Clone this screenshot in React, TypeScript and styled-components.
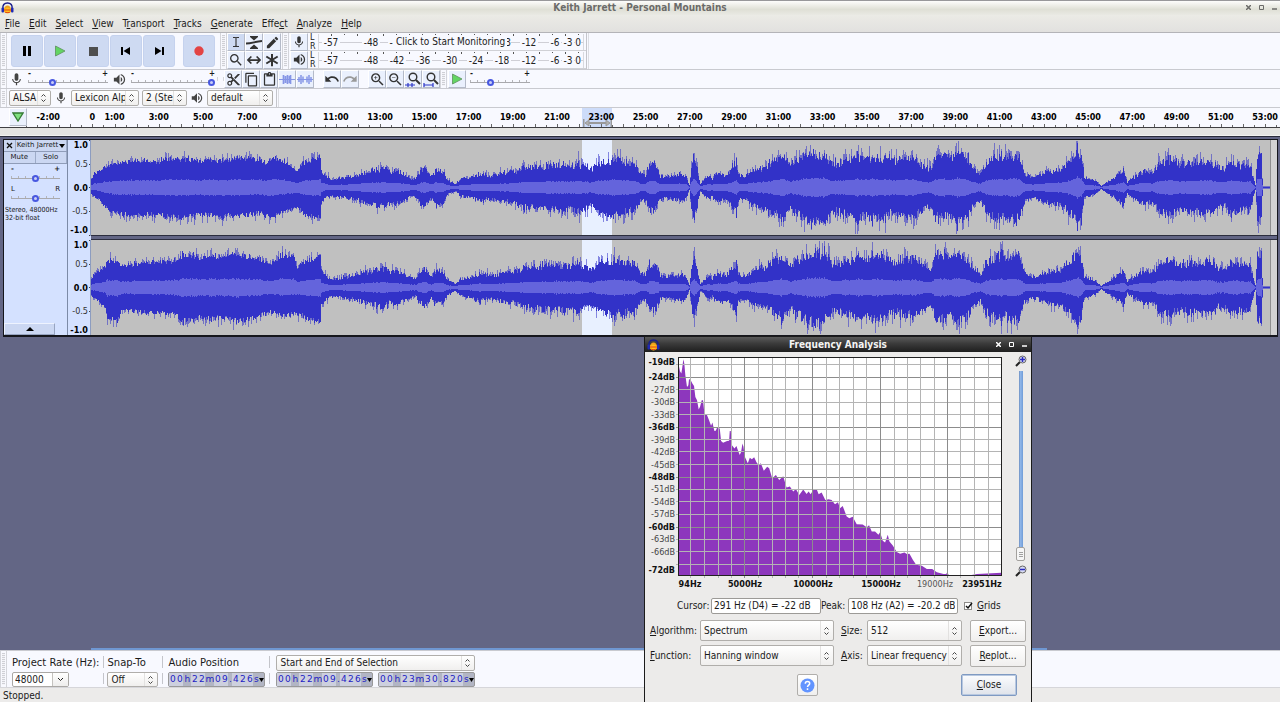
import React from "react";
import styled, { createGlobalStyle, css } from "styled-components";
import {
  MdMic,
  MdVolumeUp,
  MdContentCut,
  MdContentCopy,
  MdContentPaste,
  MdEdit,
  MdSearch,
  MdUndo,
  MdRedo,
  MdZoomIn,
  MdZoomOut,
} from "react-icons/md";

const condensed = '"DejaVu Sans Condensed", "DejaVu Sans", sans-serif';
const regular = '"DejaVu Sans", sans-serif';

const GlobalStyle = createGlobalStyle`
  * { box-sizing: border-box; }
  html, body { margin: 0; height: 100%; overflow: hidden; }
  body { font: 10px/12px ${condensed}; color: #1a1a1a; background: #636685; }
  button, input, select { font: inherit; color: inherit; margin: 0; padding: 0; }
  svg { display: block; flex: none; }
`;

const Page = styled.div`
  position: relative;
  display: flex;
  flex-direction: column;
  height: 100vh;
  overflow: hidden;
`;

/* ---------- window frame and menu ---------- */

const TitleBar = styled.header`
  display: grid;
  grid-template-columns: 1fr auto 1fr;
  align-items: center;
  height: 15px;
  padding: 0 1px 1px;
  border-top: 1px solid #98989a;
  background: linear-gradient(#fdfdfb, #dfe0d6 60%, #e9e9e4);
`;

const WindowTitle = styled.h1`
  margin: 0;
  font: bold 10px/12px ${condensed};
  color: #6b6b69;
`;

const WindowControls = styled.div<{ $light?: boolean }>`
  display: flex;
  justify-content: flex-end;
  gap: 4px;
  color: ${(p) => (p.$light ? "#fff" : "#6b6b69")};
`;

const PlainButton = styled.button`
  display: flex;
  align-items: center;
  justify-content: center;
  width: 9px;
  height: 12px;
  border: 0;
  background: none;
`;

const MenuBar = styled.nav`
  display: flex;
  align-items: center;
  gap: 9px;
  height: 18px;
  padding: 0 5px;
  background: linear-gradient(#ebebe6, #e2e1df);
  border-bottom: 1px solid #b4b4b8;
`;

const MenuItem = styled.a`
  color: #1c1c1c;
  text-decoration: none;
  white-space: nowrap;
`;

/* ---------- toolbars ---------- */

const ToolDock = styled.div`
  background: #f8f9ff;
`;

const ToolRow = styled.div<{ $h: number }>`
  display: flex;
  align-items: center;
  height: ${(p) => p.$h}px;
  border-bottom: 1px solid #c9cad0;
  overflow: hidden;
`;

const Grip = styled.i`
  flex: none;
  align-self: stretch;
  width: 7px;
  border-right: 1px solid #d4d5da;
  border-left: 1px solid #d4d5da;
  background: repeating-linear-gradient(#cfd0d6 0 1px, #f4f4f8 1px 2px) content-box;
  padding: 2px 1px;
`;

const Divider = styled.i`
  flex: none;
  align-self: stretch;
  width: 3px;
  border-left: 1px solid #c4c5cb;
  border-right: 1px solid #dcdde2;
`;

const TransportGroup = styled.div`
  display: flex;
  gap: 1px;
  padding: 0 5px 0 4px;
`;

const TransportButton = styled.button<{ $apart?: boolean }>`
  display: flex;
  align-items: center;
  justify-content: center;
  width: 32px;
  height: 32px;
  margin-left: ${(p) => (p.$apart ? 7 : 0)}px;
  border: 1px solid #c5d2ee;
  border-radius: 3px;
  background: #cedaf2;
`;

const ToolGrid = styled.div`
  display: grid;
  grid-template-columns: repeat(3, 18px);
  grid-auto-rows: 18px;
  margin-right: 1px;
`;

const ToolButton = styled.button<{ $on?: boolean }>`
  display: flex;
  align-items: center;
  justify-content: center;
  flex: none;
  width: 18px;
  height: 18px;
  border: 1px solid;
  border-color: #fff #b4bac8 #b4bac8 #fff;
  background: ${(p) => (p.$on ? "#cedaf2" : "#eaf0fd")};
  color: #333;
`;

const ButtonStrip = styled.div<{ $gap?: number }>`
  display: flex;
  margin-left: ${(p) => p.$gap ?? 0}px;
`;

const MeterStack = styled.div`
  display: flex;
  flex-direction: column;
  width: 296px;
  margin-left: 1px;
`;

const MeterRow = styled.div`
  display: flex;
  align-items: center;
  height: 18px;
  border-bottom: 1px solid #d0d1d6;
`;

const ChannelLetters = styled.div`
  display: flex;
  flex-direction: column;
  width: 10px;
  padding-left: 2px;
  font: 8px/9px ${regular};
  span { height: 9px; }
`;

const MeterFace = styled.div`
  position: relative;
  width: 266px;
  height: 16px;
  border-left: 1px solid #d8d9de;
  border-right: 1px solid #d8d9de;
`;

const MeterHint = styled.button`
  position: absolute;
  left: 75px;
  top: 1px;
  padding: 0 2px;
  border: 0;
  background: #f8f9ff;
  font: 10px/14px ${condensed};
  white-space: nowrap;
`;

const SliderBox = styled.div<{ $w: number }>`
  position: relative;
  flex: none;
  width: ${(p) => p.$w}px;
  height: 14px;
`;

const SliderMark = styled.span<{ $end?: boolean }>`
  position: absolute;
  top: -2px;
  ${(p) => (p.$end ? "right: 0" : "left: 0")};
  font: bold 8px/8px ${condensed};
`;

const Range = styled.input.attrs({ type: "range" })`
  appearance: none;
  display: block;
  width: 100%;
  height: 8px;
  margin-top: 6px;
  background:
    linear-gradient(#a9a9ad, #a9a9ad) 0 4px / 100% 1px no-repeat,
    repeating-linear-gradient(90deg, #b4b4b8 0 1px, transparent 1px 7px) 0 2px / 100% 2px no-repeat;
  &::-webkit-slider-thumb {
    appearance: none;
    width: 7px;
    height: 7px;
    border: 2px solid #4858e0;
    border-radius: 50%;
    background: #c9cdf6;
  }
`;

const comboFace = css`
  border: 1px solid #b0aeab;
  border-radius: 2px;
  background: linear-gradient(#ffffff, #f0efee);
`;

const Combo = styled.span<{ $w: number; $h: number }>`
  ${comboFace}
  display: flex;
  align-items: center;
  flex: none;
  width: ${(p) => p.$w}px;
  height: ${(p) => p.$h}px;
  padding: 0 3px;
`;

const ComboSelect = styled.select`
  appearance: none;
  flex: 1;
  min-width: 0;
  height: 100%;
  margin-right: 2px;
  border: 0;
  border-right: 1px solid #e2e1e0;
  background: none;
  outline: 0;
  text-overflow: clip;
`;

const DeviceRow = styled(ToolRow)`
  gap: 3px;
  > ${Grip} { margin-right: -1px; }
`;

/* ---------- ruler and tracks ---------- */

const Ruler = styled.div`
  position: relative;
  height: 20px;
  background: #f8f9ff;
  border-bottom: 1px solid #3f3f42;
`;

const PinButton = styled(ToolButton)`
  position: absolute;
  left: 9px;
  top: 0;
`;

const ScrollBand = styled.div`
  height: 8px;
  background: #e4e4e2;
  border-bottom: 1px solid #f2f2f0;
`;

const TrackArea = styled.main`
  flex: 1;
  min-height: 0;
  display: flex;
  flex-direction: column;
  background: #636685;
  border-top: 1px solid #2a2c3c;
`;

const Track = styled.section`
  display: grid;
  grid-template-columns: 64px 23px minmax(0, 1fr);
  margin: 2px 2px 0 3px;
  height: 198px;
  border: 1px solid #15161c;
  border-bottom-width: 2px;
`;

const TrackPanel = styled.div`
  display: flex;
  flex-direction: column;
  background: #d4e1ff;
  border-right: 1px solid #7c8aa6;
  font: 7px/9px ${regular};
`;

const PanelRow = styled.div`
  display: flex;
  height: 12px;
  border-bottom: 1px solid #8f9cb8;
`;

const PanelButton = styled.button<{ $w?: number }>`
  display: flex;
  align-items: center;
  justify-content: center;
  gap: 1px;
  ${(p) => (p.$w ? `width: ${p.$w}px;` : "flex: 1;")}
  border: 0;
  border-right: 1px solid #9dabc8;
  background: #cbd7f2;
  font: 7px/9px ${regular};
  white-space: nowrap;
`;

const PanelSlider = styled.label`
  display: flex;
  flex-wrap: wrap;
  justify-content: space-between;
  height: 20px;
  padding: 2px 7px 0;
  line-height: 6px;
  ${Range} { margin-top: 0; flex: 0 0 100%; }
`;

const TrackInfo = styled.p`
  margin: 2px 0 0;
  padding-left: 1px;
  line-height: 8px;
  white-space: nowrap;
  font-family: ${condensed};
`;

const CollapseButton = styled.button`
  display: flex;
  align-items: center;
  justify-content: center;
  width: 51px;
  height: 12px;
  margin-top: auto;
  border: 1px solid;
  border-color: #eef3ff #97a4c0 #97a4c0 #eef3ff;
  background: #cbd7f2;
`;

const Channels = styled.div`
  display: flex;
  flex-direction: column;
  justify-content: space-between;
  background: #636685;
`;

const ScaleColumn = styled(Channels)`
  background: #d4e1ff;
  svg + svg { height: 95px; }
`;

const ChannelView = styled.div`
  display: flex;
  height: 96px;
  border-bottom: 1px solid #2c2e3e;
  background: linear-gradient(90deg, #c0c0c0 calc(100% - 7px), #8f8f8f calc(100% - 7px) calc(100% - 6px), #d2d2d2 calc(100% - 6px));
  & + & { border-top: 1px solid #2c2e3e; border-bottom: 0; }
`;

/* ---------- bottom bars ---------- */

const ScrollLine = styled.div`
  margin: auto 233px 0 91px;
  height: 2px;
  background: #6f97d2;
`;

const SelectionBar = styled.footer`
  display: flex;
  height: 38px;
  border-top: 1px solid #c9cad0;
  border-bottom: 1px solid #d6d6da;
  background: #f8f9ff;
`;

const Field = styled.div<{ $ml: number }>`
  display: flex;
  flex-direction: column;
  justify-content: space-between;
  align-items: flex-start;
  margin-left: ${(p) => p.$ml}px;
  padding: 4px 0 0;
  white-space: nowrap;
`;

const FieldLabel = styled.label`
  font: 10px/15px ${regular};
`;

const BarSeparator = styled.i`
  width: 1px;
  margin: 5px 0 3px 4px;
  background: repeating-linear-gradient(#c4c5cb 0 12px, transparent 12px 17px);
`;

const RateBox = styled.span`
  display: flex;
  width: 57px;
  height: 15px;
  border: 1px solid #aaa8a5;
  border-radius: 2px;
  background: #fff;
`;

const RateInput = styled.input`
  width: 40px;
  border: 0;
  border-right: 1px solid #c4c2bf;
  padding-left: 2px;
  background: none;
`;

const RateArrow = styled.button`
  flex: 1;
  display: flex;
  align-items: center;
  justify-content: center;
  border: 0;
  background: linear-gradient(#fff, #eeedec);
`;

const TimeBox = styled.span`
  display: flex;
  width: 97px;
  height: 15px;
  border: 1px solid #999;
  border-radius: 2px;
  background: #b2b5c4;
  color: #2222c4;
  font: 9px/13px ${regular};
`;

const TimeCell = styled.span<{ $w: number; $digit?: boolean }>`
  width: ${(p) => p.$w}px;
  text-align: center;
  background: ${(p) => (p.$digit ? "#cdd0de" : "transparent")};
`;

const TimeArrow = styled.button`
  flex: 1;
  display: flex;
  align-items: center;
  justify-content: center;
  border: 0;
  background: none;
`;

const Pair = styled.div`
  display: flex;
  gap: 5px;
`;

const StatusBar = styled.div`
  height: 14px;
  padding: 2px 3px 0;
  background: #ecebea;
`;

/* ---------- analysis window ---------- */

const Dialog = styled.section`
  position: absolute;
  left: 644px;
  top: 336px;
  width: 388px;
  height: 400px;
  border: 1px solid #1b1b1b;
  background: #ecebea;
`;

const DialogTitleBar = styled.header`
  display: grid;
  grid-template-columns: 1fr auto 1fr;
  align-items: center;
  height: 15px;
  padding: 0 2px;
  background: linear-gradient(#5a5a5a, #3a3a3a 45%, #1e1e1e);
`;

const DialogTitle = styled.h2`
  margin: 0;
  color: #f4f4f4;
  font: bold 10px/13px ${condensed};
`;

const PlotRow = styled.div`
  display: flex;
  height: 243px;
`;

const ZoomColumn = styled.div`
  display: flex;
  flex-direction: column;
  align-items: center;
  width: 23px;
  margin-left: 7px;
  padding-top: 3px;
`;

const VerticalRange = styled.input.attrs({ type: "range" })`
  appearance: none;
  writing-mode: vertical-lr;
  width: 10px;
  height: 190px;
  margin: 4px 0;
  background: linear-gradient(90deg, #6f8fc0, #8fb6ea 40%, #6f9bd6) 50% 0 / 4px 100% no-repeat;
  &::-webkit-slider-thumb {
    appearance: none;
    width: 9px;
    height: 14px;
    border: 1px solid #a3a19e;
    border-radius: 2px;
    background:
      repeating-linear-gradient(#a0a0a0 0 1px, #f6f6f6 1px 2px) 50% 50% / 4px 5px no-repeat,
      #f6f6f6;
  }
`;

const ReadoutRow = styled.div`
  display: flex;
  align-items: center;
  height: 17px;
  padding-left: 32px;
  margin-top: 2px;
`;

const ReadoutLabel = styled.label<{ $w: number }>`
  width: ${(p) => p.$w}px;
  white-space: nowrap;
`;

const Readout = styled.input`
  width: 110px;
  height: 16px;
  border: 1px solid #9c9a97;
  border-radius: 2px;
  padding: 0 2px;
  background: #fff;
`;

const CheckLabel = styled.label`
  display: flex;
  align-items: center;
  gap: 5px;
  margin-left: 6px;
`;

const CheckBox = styled.input.attrs({ type: "checkbox" })`
  appearance: none;
  width: 8px;
  height: 8px;
  border: 1px solid #8c8a87;
  background: #fff;
  &:not(:checked) + svg { display: none; }
`;

const CheckWrap = styled.span`
  position: relative;
  display: flex;
  svg { position: absolute; left: 0; top: 0; pointer-events: none; }
`;

const OptionsGrid = styled.div`
  display: grid;
  grid-template-columns: 50px 134px 33px 95px auto;
  grid-auto-rows: 21px;
  row-gap: 4px;
  align-items: center;
  margin: 6px 0 0 5px;
  label:nth-of-type(even) { padding-left: 7px; }
  > button { margin-left: 8px; }
`;

const DialogButton = styled.button<{ $focus?: boolean; $w: number }>`
  ${comboFace}
  display: flex;
  align-items: center;
  justify-content: center;
  width: ${(p) => p.$w}px;
  height: 22px;
  ${(p) =>
    p.$focus &&
    `border: 1px solid #7f9ac2; box-shadow: inset 0 0 0 1px #b8c8e0; background: linear-gradient(#fbfcfe, #dfe3ea);`}
`;

const DialogActions = styled.div`
  display: flex;
  justify-content: space-between;
  margin: 8px 14px 0 152px;
`;

/* ---------- icons ---------- */

const AppLogo = () => (
  <svg width="13" height="12" viewBox="0 0 26 24">
    <path d="M4 15C2 6 7 2 13 2s11 4 9 13" fill="none" stroke="#1b1f8c" strokeWidth="3" />
    <path d="M6 16c0-6 3-9 7-9s7 3 7 9z" fill="#f0a01c" />
    <path d="M6 14l2-2 2 2 2-4 2 3 2-2 2 3 2-1v6c-3 5-11 5-14 0z" fill="#ffc21e" />
    <path d="M6 15h14v2H6zM7 19c4 2 8 2 12 0-1 4-11 4-12 0z" fill="#e33a12" />
    <rect x="1" y="11" width="5" height="10" rx="2" fill="#2029b4" />
    <rect x="20" y="11" width="5" height="10" rx="2" fill="#2029b4" />
  </svg>
);

const UpDown = () => (
  <svg width="7" height="10" viewBox="0 0 7 10" fill="none" stroke="#444">
    <path d="M1.5 3.5l2-2 2 2M1.5 6.5l2 2 2-2" />
  </svg>
);

const Down = ({ w = 5 }) => (
  <svg width={w} height="4" viewBox="0 0 6 4" preserveAspectRatio="none">
    <path d="M0 0h6L3 4z" />
  </svg>
);

const Glyph = ({ children, size = 12 }: { children: React.ReactNode; size?: number }) => (
  <svg width={size} height={size} viewBox="0 0 16 16" fill="none" stroke="#333" strokeWidth="2">
    {children}
  </svg>
);

const Play = ({ size = 12 }) => (
  <svg width={size} height={size} viewBox="0 0 12 12">
    <path d="M1.500 1l9.500 5-9.500 5z" fill="#63d563" stroke="#5d8f5d" strokeWidth="0.8" />
  </svg>
);

const transport: { name: string; icon: React.ReactNode; apart?: boolean }[] = [
  { name: "Pause", icon: <svg width="10" height="10"><path d="M1 0h3v10H1zM6 0h3v10H6z" /></svg> },
  { name: "Play", icon: <Play /> },
  { name: "Stop", icon: <svg width="9" height="9"><path d="M0 0h9v9H0z" fill="#4f4f4f" /></svg> },
  { name: "Skip to start", icon: <svg width="10" height="10"><path d="M0 1h2v8H0zM9 1v8L2.500 5z" /></svg> },
  { name: "Skip to end", icon: <svg width="10" height="10"><path d="M8 1h2v8H8zM1 1v8l6.500-4z" /></svg> },
  { name: "Record", icon: <svg width="10" height="10"><circle cx="5" cy="5" r="4.700" fill="#e34444" /></svg>, apart: true },
];

const tools: { name: string; icon: React.ReactNode }[] = [
  { name: "Selection", icon: <Glyph><path d="M4 2h3l1 1 1-1h3M8 3v10M4 14h3l1-1 1 1h3" strokeWidth="1.500" /></Glyph> },
  {
    name: "Envelope",
    icon: (
      <Glyph size={16}>
        <path d="M0 9.500c6 0 9-2 16-2.500" strokeWidth="2" />
        <path d="M4 2h8v1L8 6.500 4 3zM4 15h8v-1l-4-3.500L4 14z" fill="#333" stroke="none" />
      </Glyph>
    ),
  },
  { name: "Draw", icon: <MdEdit size={15} /> },
  { name: "Zoom", icon: <MdSearch size={16} /> },
  { name: "Time shift", icon: <Glyph size={14}><path d="M2 8h12M5 4L1 8l4 4M11 4l4 4-4 4" /></Glyph> },
  { name: "Multi-tool", icon: <Glyph size={14}><path d="M8 1v14M1.500 4l13 8M14.500 4l-13 8" strokeWidth="2.300" /></Glyph> },
];

const Burst = ({ outer }: { outer?: boolean }) => (
  <svg width="16" height="12" viewBox="0 0 16 12" stroke="#8595e6" fill="none">
    <path d="M0 6.500h16" />
    {outer ? (
      <path d="M2 4v5M4 2v9M6 3.500v6M10 3.500v6M12 2v9M14 4v5" strokeWidth="1.500" />
    ) : (
      <path d="M4.500 2v9M6.500 3v7M8.500 2v9M10.500 3v7M11.500 2v9" strokeWidth="1.700" />
    )}
  </svg>
);

const ZoomFit = ({ ends }: { ends?: boolean }) => (
  <svg width="16" height="16" viewBox="0 0 16 16" fill="none" stroke="#333">
    <circle cx="8" cy="6" r="3.800" strokeWidth="1.400" />
    <path d="M11 9l4 4" strokeWidth="2" />
    <path d={ends ? "M1 12v4M10 12v4M1 14h9" : "M0 14h10M3 12v4M7 12v4"} stroke="#2b35c8" strokeWidth="1.200" />
  </svg>
);

const MiniZoom = ({ plus }: { plus?: boolean }) => (
  <svg width="12" height="12" viewBox="0 0 12 12" fill="none">
    <path d="M1 11l4-4" stroke="#222" strokeWidth="2" />
    <circle cx="7.500" cy="4.500" r="3.500" fill="#d9ddf4" stroke="#666" />
    <path d={plus ? "M5 4.500h5M7.500 2v5" : "M5 4.500h5"} stroke="#2b2bc0" strokeWidth="1.500" />
  </svg>
);

const Close = () => (
  <svg width="5" height="5" viewBox="0 0 5 5" stroke="currentColor" strokeWidth="1.500"><path d="M0 0l5 5M5 0L0 5" /></svg>
);
const Restore = () => (
  <svg width="5" height="5" viewBox="0 0 5 5" stroke="currentColor" fill="none"><path d="M.5.5h4v4h-4z" /></svg>
);
const Minimize = () => (
  <svg width="5" height="5" viewBox="0 0 5 5" stroke="currentColor" strokeWidth="1.500"><path d="M0 4h5" /></svg>
);

/* ---------- shared pieces ---------- */

const Hot = ({ text, at = 0 }: { text: string; at?: number }) => (
  <span>
    {text.slice(0, at)}
    <u>{text[at]}</u>
    {text.slice(at + 1)}
  </span>
);

const Select = ({ w, h, value, id }: { w: number; h: number; value: string; id: string }) => (
  <Combo $w={w} $h={h}>
    <ComboSelect id={id} aria-label={id} defaultValue={value}>
      <option>{value}</option>
    </ComboSelect>
    <UpDown />
  </Combo>
);

const Slider = ({ w, value, name }: { w: number; value: number; name: string }) => (
  <SliderBox $w={w}>
    <SliderMark>-</SliderMark>
    <SliderMark $end>+</SliderMark>
    <Range aria-label={name} defaultValue={value} />
  </SliderBox>
);

const WindowButtons = ({ light }: { light?: boolean }) => (
  <WindowControls $light={light}>
    <PlainButton aria-label="Close window"><Close /></PlainButton>
    <PlainButton aria-label="Restore"><Restore /></PlainButton>
    <PlainButton aria-label="Minimize"><Minimize /></PlainButton>
  </WindowControls>
);

/* ---------- meters ---------- */

type Mark = [string, number];

const lowMarks: Mark[] = [["-57", 12], ["-48", 52]];
const midMarks: Mark[] = [["-42", 78], ["-36", 104], ["-30", 131], ["-24", 157], ["-18", 183]];
const highMarks: Mark[] = [["-12", 210], ["-6", 236], ["-3", 249], ["0", 259]];
/* the hint button covers the middle of the recording scale, only its edges stay visible */
const edgeMarks: Mark[] = [["-", 72], ["3", 189]];

const MeterScale = ({ covered }: { covered: boolean }) => (
  <svg width="264" height="16" fontFamily={condensed} fontSize="10">
    <path d="M0 8.500h264" stroke="#cfcfd6" />
    {Array.from({ length: 20 }, (_, i) => (
      <path key={i} d={`M${12 + i * 13}.500 0v${i % 2 ? 1 : 2}`} stroke="#555" />
    ))}
    {[...lowMarks, ...(covered ? edgeMarks : midMarks), ...highMarks].map(([t, x]) => (
      <g key={t}>
        <rect x={x - t.length * 3} y="3" width={t.length * 6} height="10" fill="#f8f9ff" />
        <text x={x} y="12" textAnchor="middle" fill="#222">{t}</text>
      </g>
    ))}
  </svg>
);

const Meter = ({ playback = false }: { playback?: boolean }) => (
  <MeterRow>
    <ToolButton aria-label={playback ? "Playback meter" : "Recording meter"}>
      {playback ? <MdVolumeUp size={15} /> : <MdMic size={14} />}
    </ToolButton>
    <ChannelLetters><span>L</span><span>R</span></ChannelLetters>
    <MeterFace>
      <MeterScale covered={!playback} />
      {!playback && <MeterHint>Click to Start Monitoring</MeterHint>}
    </MeterFace>
  </MeterRow>
);

/* ---------- time ruler ---------- */

const pct = (x: number) => `${(x / 1280) * 100}%`;
const minuteX = (m: number) => 92.4 + m * 22.125;

const TimeRuler = () => {
  const ticks = Array.from({ length: 114 }, (_, i) => -3 + i / 2);
  const labels = [-2, 0, ...Array.from({ length: 27 }, (_, i) => 1 + i * 2)];
  return (
    <Ruler>
      <svg width="100%" height="19" fontFamily={condensed} fontSize="9" fontWeight="bold">
        <rect x={pct(582)} y="0" width={pct(30)} height="19" fill="#cddcfa" />
        {ticks.map((m) => (
          <rect key={m} x={pct(Math.round(minuteX(m)))} y={m % 1 ? 17 : 16} width="1" height="3" fill="#666" />
        ))}
        <svg x={pct(583)} y="11" width="29" height="8" fill="#b0b0b0" stroke="#999">
          <path d="M5 4h19M.500 0v8M28.500 0v8" strokeWidth="2" />
          <path d="M6 1L2 4l4 3zM23 1l4 3-4 3z" />
        </svg>
        {labels.map((m) => (
          <text key={m} x={pct(minuteX(m))} y="12" textAnchor="middle">{m === 0 ? "0" : `${m}:00`}</text>
        ))}
      </svg>
      <PinButton aria-label="Pin play head">
        <svg width="12" height="10" viewBox="0 0 12 10">
          <path d="M1 1h10L6 9z" fill="#7fe07f" stroke="#357a35" strokeWidth="1.300" />
        </svg>
      </PinButton>
    </Ruler>
  );
};

/* ---------- waveform ---------- */

type Envelope = [number, number][];

const rest: Envelope = [
  [352, 11], [366, 15], [385, 20], [388, 15], [393, 17], [401, 14], [411, 9], [415, 9], [424, 20], [428, 14], [431, 10],
  [436, 18], [443, 15], [447, 7], [455, 3], [460, 8], [470, 10], [480, 13], [490, 11], [505, 14], [515, 16], [525, 20], [535, 20],
  [550, 22], [560, 22], [570, 22], [578, 24], [591, 17], [600, 25], [615, 28], [635, 23], [640, 14], [645, 12], [650, 24],
  [655, 23], [660, 11], [668, 11], [680, 12], [685, 12], [689, 2], [691, 20], [694, 30], [697, 18], [700, 3], [708, 11], [712, 9],
  [715, 13], [725, 12], [730, 16], [736, 25], [738, 13], [745, 11], [755, 18], [765, 20], [775, 26], [782, 31], [790, 21],
  [800, 29], [812, 35], [826, 33], [832, 23], [840, 24], [850, 28], [857, 31], [865, 28], [875, 31], [885, 29], [895, 25],
  [905, 29], [915, 27], [925, 20], [930, 19], [935, 29], [943, 32], [950, 28], [957, 34], [967, 30], [972, 20], [980, 13],
  [984, 22], [990, 28], [1000, 32], [1005, 28], [1014, 34], [1020, 29], [1024, 14], [1032, 10], [1040, 12], [1050, 16],
  [1060, 17], [1065, 21], [1072, 28], [1077, 36], [1081, 30], [1084, 10], [1095, 6], [1101, 1], [1105, 4], [1115, 10], [1123, 18],
  [1127, 5], [1130, 8], [1145, 17], [1152, 13], [1158, 23], [1170, 28], [1180, 22], [1190, 25], [1200, 25], [1210, 27],
  [1217, 19], [1225, 19], [1230, 26], [1240, 22], [1250, 22], [1254, 5], [1255, 2], [1257, 32], [1261, 33], [1262, 8], [1263, 1], [1270, 1],
];

const leftTop: Envelope = [
  [91, 8], [94, 14], [100, 16], [106, 21], [115, 24], [130, 26], [150, 27], [160, 25], [161, 29], [175, 29], [190, 28],
  [200, 26], [210, 28], [225, 26], [235, 30], [260, 28], [265, 24], [273, 30], [283, 27], [290, 21], [297, 16], [302, 24],
  [310, 26], [320, 31], [321, 16], [330, 8], [340, 9], ...rest,
];
const leftBottom: Envelope = [
  [91, 6], [100, 13], [106, 20], [115, 26], [130, 27], [160, 27], [178, 30], [200, 27], [222, 29], [245, 28], [260, 25],
  [270, 31], [285, 22], [297, 20], [305, 27], [318, 30], [320, 30], [321, 16], [325, 9], [340, 9], ...rest,
];
const rightTop: Envelope = [
  [91, 8], [94, 14], [100, 17], [105, 21], [107, 27], [118, 26], [120, 21], [150, 25], [178, 26], [180, 32], [200, 30],
  [220, 31], [245, 32], [260, 27], [270, 23], [280, 31], [293, 32], [297, 20], [305, 26], [320, 32], [321, 16], [330, 8],
  [340, 9], ...rest,
];
const rightBottom: Envelope = [
  [91, 8], [100, 15], [105, 20], [107, 31], [119, 31], [121, 22], [150, 25], [175, 26], [180, 34], [200, 30], [230, 31],
  [240, 34], [250, 31], [268, 24], [285, 28], [297, 26], [305, 30], [320, 34], [321, 17], [330, 8], [340, 9], ...rest,
];

const sample = (env: Envelope, x: number) => {
  const i = env.findIndex(([px]) => px > x);
  if (i < 0) return env[env.length - 1][1];
  if (i === 0) return env[0][1];
  const [x0, y0] = env[i - 1];
  const [x1, y1] = env[i];
  return y0 + ((y1 - y0) * (x - x0)) / (x1 - x0);
};

const randomizer = (seed: number) => () => {
  seed = (seed * 1664525 + 1013904223) >>> 0;
  return seed / 4294967296;
};

const buildWave = (top: Envelope, bottom: Envelope, seed: number) => {
  const next = randomizer(seed);
  const mid = 47;
  let body = "";
  let peaks = "";
  let rms = "";
  for (let i = 0; i < 1179; i++) {
    const x = 91 + i;
    const bar = (u: number, d: number) => `M${i} ${mid - u}h1v${u + d + 1}h-1z`;
    const quiet = x > 1262;
    const loud = next() ** 4;
    const side = (env: Envelope) => {
      const e = sample(env, x);
      if (quiet) return [0, 1];
      const head = x < 322;
      const lo = head ? 0.88 : 0.78;
      const base = e * (lo + (head ? 0.18 : 0.32) * next() + (head ? 0.08 : 0.18) * loud);
      const peak = base + e * (head ? 0.25 : 0.4) * next() ** 3;
      return [Math.min(44, Math.round(base)), Math.min(46, Math.round(peak))];
    };
    const [bu, pu] = side(top);
    const [bd, pd] = side(bottom);
    body += bar(bu, bd);
    peaks += bar(pu, pd);
    if (!quiet) {
      const k = 0.23 + 0.03 * next() + 0.04 * loud;
      rms += bar(Math.round(sample(top, x) * k), Math.round(sample(bottom, x) * k));
    }
  }
  return { body, peaks, rms };
};

const waves = [buildWave(leftTop, leftBottom, 7), buildWave(rightTop, rightBottom, 41)];

const Waveform = ({ index }: { index: number }) => {
  const w = waves[index];
  return (
    <svg width="calc(100% - 7px)" height="95" viewBox="0 0 1179 95" preserveAspectRatio="none" shapeRendering="crispEdges">
      <rect x="491" width="30" height="95" fill="#e8f0ff" />
      <path d={w.peaks} fill="#3232c8" fillOpacity="0.55" />
      <path d={w.body} fill="#3232c8" />
      <path d={w.rms} fill="#6464dc" />
    </svg>
  );
};

const AmplitudeScale = () => (
  <svg width="23" height="96" fontFamily={condensed} fontSize="9" textAnchor="end">
    {["1.0", "0.5", "0.0", "-0.5", "-1.0"].map((t, i) => {
      const strong = i % 2 === 0;
      return (
        <g key={t}>
          <text x="20" y={[8, 27, 51, 74, 93][i]} fontWeight={strong ? "bold" : "normal"} fill={strong ? "#000" : "#333"}>{t}</text>
          <path d={`M21 ${[0, 24, 47, 71, 95][i]}.500h2`} stroke="#444" />
        </g>
      );
    })}
    <path d="M22.500 0v96" stroke="#8c9cc0" />
  </svg>
);

/* ---------- spectrum ---------- */

const spectrum =
  "117,88 121,108 125,115 128,95 131,72 134,85 137,120 142,155 146,150 148,132 152,133 158,145 163,152 167,185 172,195 177,223 181,215 186,195 190,195 194,235 202,240 208,255 214,272 218,262 224,288 228,287 232,278 240,280 244,318 250,323 262,318 268,317 270,288 273,288 276,330 284,340 290,333 294,345 300,360 304,350 308,325 311,335 315,365 324,385 330,368 336,373 343,367 350,382 356,390 363,385 372,407 382,395 388,400 397,430 408,420 418,435 430,424 440,458 450,455 460,470 468,462 478,480 490,464 500,477 506,470 512,478 520,465 530,462 536,478 545,473 556,495 566,493 575,495 585,508 594,502 600,520 608,513 620,545 628,550 638,546 650,568 668,569 680,577 687,571 695,590 705,590 715,600 720,592 728,618 735,623 743,600 748,620 758,632 770,652 780,657 793,653 800,658 808,657 818,675 828,690 845,693 860,703 876,703 890,713 910,718 918,718 921,713 926,722 990,722 1010,718 1084,714 1084,724 117,724";

/* grid positions in the plot's own pixels */
const dbLines = [12, 25, 37, 50, 62, 75, 87, 99, 112, 125, 137, 149, 162, 175, 187, 199, 212];
const hzLines = [45, 59, 73, 86, 99, 113, 127, 140, 153, 167, 181, 194, 208, 221, 235, 249, 262, 275, 289, 302, 315, 329, 343];

const hzLabels: [string, number, boolean][] = [
  ["94Hz", 45, true], ["5000Hz", 100, true], ["10000Hz", 168, true],
  ["15000Hz", 236, true], ["19000Hz", 290, false], ["23951Hz", 337, true],
];

const dbLabels: [string, number][] = [
  ["-19dB", 13], ["-24dB", 28], ["-27dB", 41], ["-30dB", 53], ["-33dB", 66], ["-36dB", 78], ["-39dB", 91], ["-42dB", 103],
  ["-45dB", 116], ["-48dB", 128], ["-51dB", 140], ["-54dB", 153], ["-57dB", 165], ["-60dB", 178], ["-63dB", 190], ["-66dB", 203], ["-72dB", 221],
];

const SpectrumPlot = () => (
  <svg width="358" height="243" fontFamily={condensed} fontSize="9">
    <rect x="33" y="5" width="324" height="219" fill="#fff" />
    <svg x="33" y="5" width="324" height="219" viewBox="115 65 970 659" preserveAspectRatio="none">
      <polygon points={spectrum} fill="#8d37bd" />
    </svg>
    {dbLines.map((y, i) => (
      <path key={y} d={`M31 ${y}.500h326`} stroke={i % 4 === 1 ? "#8c8c8c" : "#b4b4b4"} />
    ))}
    {hzLines.map((x, i) => (
      <path key={x} d={`M${x}.500 5v221`} stroke={i % 5 === 4 ? "#8c8c8c" : "#b4b4b4"} />
    ))}
    <rect x="33.500" y="5.500" width="323" height="218" fill="none" stroke="#222" />
    {dbLabels.map(([t, y], i) => {
      const strong = i === 16 || i === 0 || i % 4 === 1;
      return (
        <text key={t} x="30" y={y} textAnchor="end" fill={strong ? "#111" : "#444"} fontWeight={strong ? "bold" : "normal"}>{t}</text>
      );
    })}
    {hzLabels.map(([t, x, strong]) => (
      <text key={t} x={x} y="235" textAnchor="middle" fill={strong ? "#111" : "#555"} fontWeight={strong ? "bold" : "normal"}>{t}</text>
    ))}
  </svg>
);

/* ---------- selection bar ---------- */

const cellWidth: Record<string, number> = { h: 8, m: 9, ".": 4, s: 6 };

const TimeField = ({ value, id }: { value: string; id: string }) => (
  <TimeBox role="group" aria-label={id}>
    {value.split("").map((c, i) => (
      <TimeCell key={i} $w={cellWidth[c] ?? 7} $digit={/\d/.test(c)}>{c}</TimeCell>
    ))}
    <TimeArrow aria-label={`${id} format`}><Down w={5} /></TimeArrow>
  </TimeBox>
);

const menus: [string, number][] = [
  ["File", 0], ["Edit", 0], ["Select", 0], ["View", 0], ["Transport", 1], ["Tracks", 0],
  ["Generate", 0], ["Effect", 4], ["Analyze", 0], ["Help", 0],
];

const FrequencyWindow = () => (
  <Dialog role="dialog" aria-label="Frequency Analysis">
    <DialogTitleBar>
      <AppLogo />
      <DialogTitle>Frequency Analysis</DialogTitle>
      <WindowButtons light />
    </DialogTitleBar>
    <PlotRow>
      <SpectrumPlot />
      <ZoomColumn>
        <MiniZoom plus />
        <VerticalRange aria-label="Vertical zoom" defaultValue={100} />
        <MiniZoom />
      </ZoomColumn>
    </PlotRow>
    <ReadoutRow>
      <ReadoutLabel $w={34} htmlFor="cursor">Cursor:</ReadoutLabel>
      <Readout id="cursor" readOnly value="291 Hz (D4) = -22 dB" />
      <ReadoutLabel $w={27} htmlFor="peak">Peak:</ReadoutLabel>
      <Readout id="peak" readOnly value="108 Hz (A2) = -20.2 dB" />
      <CheckLabel>
        <CheckWrap>
          <CheckBox defaultChecked />
          <svg width="9" height="8" fill="none" stroke="#111" strokeWidth="1.500"><path d="M2 4l2 2 4-5" /></svg>
        </CheckWrap>
        <Hot text="Grids" />
      </CheckLabel>
    </ReadoutRow>
    <OptionsGrid>
      <label htmlFor="Algorithm"><Hot text="Algorithm:" /></label>
      <Select id="Algorithm" w={134} h={21} value="Spectrum" />
      <label htmlFor="Size"><Hot text="Size:" /></label>
      <Select id="Size" w={95} h={21} value="512" />
      <DialogButton $w={56}><Hot text="Export..." /></DialogButton>
      <label htmlFor="Function"><Hot text="Function:" /></label>
      <Select id="Function" w={134} h={21} value="Hanning window" />
      <label htmlFor="Axis"><Hot text="Axis:" /></label>
      <Select id="Axis" w={95} h={21} value="Linear frequency" />
      <DialogButton $w={56}><Hot text="Replot..." /></DialogButton>
    </OptionsGrid>
    <DialogActions>
      <DialogButton $w={21} aria-label="Help">
        <svg width="15" height="15" viewBox="0 0 15 15">
          <circle cx="7.500" cy="7.500" r="7" fill="#6294ff" />
          <path d="M5.300 5.700c0-3 4.400-2.800 4.400-.2 0 1.700-2.200 1.700-2.200 3.500M7.500 10.300v1.600" fill="none" stroke="#fff" strokeWidth="1.500" />
        </svg>
      </DialogButton>
      <DialogButton $w={56} $focus><Hot text="Close" /></DialogButton>
    </DialogActions>
  </Dialog>
);

export default function App() {
  return (
    <Page>
      <GlobalStyle />
      <TitleBar>
        <AppLogo />
        <WindowTitle>Keith Jarrett - Personal Mountains</WindowTitle>
        <WindowButtons />
      </TitleBar>
      <MenuBar>
        {menus.map(([t, at]) => (
          <MenuItem key={t} href="#"><Hot text={t} at={at} /></MenuItem>
        ))}
      </MenuBar>

      <ToolDock>
        <ToolRow $h={37}>
          <Grip />
          <TransportGroup>
            {transport.map((b) => (
              <TransportButton key={b.name} aria-label={b.name} $apart={b.apart}>{b.icon}</TransportButton>
            ))}
          </TransportGroup>
          <Grip />
          <ToolGrid>
            {tools.map((t, i) => (
              <ToolButton key={t.name} aria-label={t.name} $on={i === 0}>{t.icon}</ToolButton>
            ))}
          </ToolGrid>
          <Grip />
          <MeterStack>
            <Meter />
            <Meter playback />
          </MeterStack>
          <Divider />
        </ToolRow>

        <ToolRow $h={19}>
          <Grip />
          <ButtonStrip $gap={2}><MdMic size={15} color="#444" /></ButtonStrip>
          <ButtonStrip $gap={4}><Slider name="Recording volume" w={80} value={29} /></ButtonStrip>
          <ButtonStrip $gap={4}><MdVolumeUp size={15} color="#444" /></ButtonStrip>
          <ButtonStrip $gap={4}><Slider name="Playback volume" w={84} value={100} /></ButtonStrip>
          <ButtonStrip $gap={2}><Grip /></ButtonStrip>
          <ButtonStrip>
            <ToolButton aria-label="Cut"><MdContentCut size={15} /></ToolButton>
            <ToolButton aria-label="Copy"><MdContentCopy size={15} /></ToolButton>
            <ToolButton aria-label="Paste"><MdContentPaste size={15} /></ToolButton>
            <ToolButton aria-label="Trim"><Burst /></ToolButton>
            <ToolButton aria-label="Silence"><Burst outer /></ToolButton>
          </ButtonStrip>
          <ButtonStrip $gap={9}>
            <ToolButton aria-label="Undo"><MdUndo size={16} /></ToolButton>
            <ToolButton aria-label="Redo"><MdRedo size={16} color="#999" /></ToolButton>
          </ButtonStrip>
          <ButtonStrip $gap={9}>
            <ToolButton aria-label="Zoom in"><MdZoomIn size={17} /></ToolButton>
            <ToolButton aria-label="Zoom out"><MdZoomOut size={17} /></ToolButton>
            <ToolButton aria-label="Fit selection"><ZoomFit /></ToolButton>
            <ToolButton aria-label="Fit project"><ZoomFit ends /></ToolButton>
          </ButtonStrip>
          <Grip />
          <ButtonStrip $gap={1}><ToolButton aria-label="Play at speed"><Play /></ToolButton></ButtonStrip>
          <ButtonStrip $gap={4}><Slider name="Playback speed" w={60} value={32} /></ButtonStrip>
        </ToolRow>

        <DeviceRow $h={19}>
          <Grip />
          <Select id="Audio host" w={42} h={16} value="ALSA" />
          <MdMic size={14} color="#444" />
          <Select id="Recording device" w={68} h={16} value="Lexicon Alpha" />
          <Select id="Recording channels" w={45} h={16} value="2 (Stereo)" />
          <MdVolumeUp size={14} color="#444" />
          <Select id="Playback device" w={66} h={16} value="default" />
          <Divider />
        </DeviceRow>
      </ToolDock>

      <TimeRuler />
      <ScrollBand />

      <TrackArea>
        <Track>
          <TrackPanel>
            <PanelRow>
              <PanelButton $w={12} aria-label="Close track">
                <svg width="7" height="7" viewBox="0 0 7 7" stroke="#111"><path d="M1 1l5 5M6 1L1 6" strokeWidth="1.300" /></svg>
              </PanelButton>
              <PanelButton>Keith Jarrett<Down w={6} /></PanelButton>
            </PanelRow>
            <PanelRow>
              <PanelButton>Mute</PanelButton>
              <PanelButton>Solo</PanelButton>
            </PanelRow>
            <PanelSlider><b>-</b><b>+</b><Range aria-label="Gain" defaultValue={50} /></PanelSlider>
            <PanelSlider><span>L</span><span>R</span><Range aria-label="Pan" defaultValue={50} /></PanelSlider>
            <TrackInfo>Stereo, 48000Hz<br />32-bit float</TrackInfo>
            <CollapseButton aria-label="Collapse track">
              <svg width="8" height="4"><path d="M0 4h8L4 0z" /></svg>
            </CollapseButton>
          </TrackPanel>
          <ScaleColumn>
            <AmplitudeScale />
            <AmplitudeScale />
          </ScaleColumn>
          <Channels>
            <ChannelView><Waveform index={0} /></ChannelView>
            <ChannelView><Waveform index={1} /></ChannelView>
          </Channels>
        </Track>
        <ScrollLine />
      </TrackArea>

      <SelectionBar>
        <Grip />
        <Field $ml={5}>
          <FieldLabel htmlFor="rate">Project Rate (Hz):</FieldLabel>
          <RateBox>
            <RateInput id="rate" defaultValue="48000" />
            <RateArrow aria-label="Choose rate">
              <svg width="7" height="5" fill="none" stroke="#222"><path d="M1 1l2.500 2.500L6 1" /></svg>
            </RateArrow>
          </RateBox>
        </Field>
        <BarSeparator />
        <Field $ml={3}>
          <FieldLabel htmlFor="Snap-To">Snap-To</FieldLabel>
          <Select id="Snap-To" w={51} h={15} value="Off" />
        </Field>
        <BarSeparator />
        <Field $ml={5}>
          <FieldLabel as="span">Audio Position</FieldLabel>
          <TimeField id="Audio Position" value="00h22m09.426s" />
        </Field>
        <BarSeparator />
        <Field $ml={6}>
          <Select id="Selection mode" w={199} h={16} value="Start and End of Selection" />
          <Pair>
            <TimeField id="Selection start" value="00h22m09.426s" />
            <TimeField id="Selection end" value="00h23m30.820s" />
          </Pair>
        </Field>
      </SelectionBar>
      <StatusBar role="status">Stopped.</StatusBar>

      <FrequencyWindow />
    </Page>
  );
}
